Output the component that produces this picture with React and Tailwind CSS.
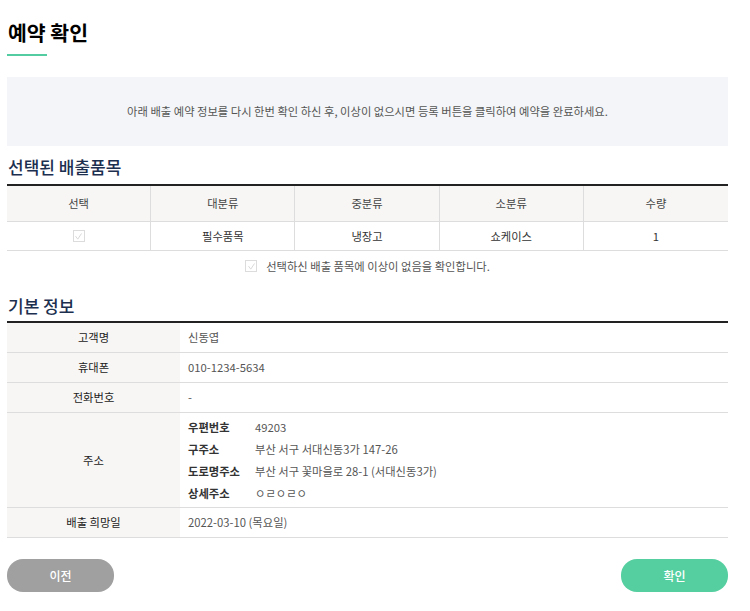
import React from 'react';

const font = { fontFamily: '"Noto Sans CJK KR", "Noto Sans", sans-serif' };

const Check = ({ className = '' }) => (
  <span className={`w-[12px] h-[12px] border border-[#dcdcdc] bg-white flex items-center justify-center ${className}`}>
    <svg viewBox="0 0 12 12" className="w-[9px] h-[9px]" fill="none" stroke="#d8d8d8" strokeWidth="1.3">
      <path d="M2 5.5 L5 9.5 L10 2" />
    </svg>
  </span>
);

const headers = ['선택', '대분류', '중분류', '소분류', '수량'];

const InfoRow = ({ label, children, tall }) => (
  <div className="flex border-b border-[#dddddd]">
    <div className={`w-[173px] shrink-0 bg-[#f7f6f4] flex items-center justify-center text-[11.3px] text-[#222] ${tall ? '' : 'h-[29px]'}`}>
      {label}
    </div>
    <div className="flex-1 pl-[8px] flex items-center text-[11.3px] text-[#555]">{children}</div>
  </div>
);

const addr = [
  ['우편번호', '49203'],
  ['구주소', '부산 서구 서대신동3가 147-26'],
  ['도로명주소', '부산 서구 꽃마을로 28-1 (서대신동3가)'],
  ['상세주소', 'ㅇㄹㅇㄹㅇ'],
];

export default function App() {
  return (
    <div className="bg-white min-h-[611px]" style={font}>
      <div className="ml-[7px] w-[721px] pt-[19px]">
        {/* Title */}
        <h1 className="text-[20.5px] leading-[26px] font-bold text-black pl-[1px]">예약 확인</h1>
        <div className="mt-[9px] w-[40px] h-[2px] bg-[#52cca0]" />

        {/* Notice */}
        <div className="mt-[21px] h-[69px] bg-[#f4f5f8] flex items-center justify-center text-[11.3px] text-[#555]">
          아래 배출 예약 정보를 다시 한번 확인 하신 후, 이상이 없으시면 등록 버튼을 클릭하여 예약을 완료하세요.
        </div>

        {/* Selected items */}
        <h2 className="mt-[9px] text-[17px] leading-[24px] font-medium text-[#1c2f4f] pl-[1px]">선택된 배출품목</h2>
        <div className="mt-[5px] border-t-2 border-[#222]">
          <div className="grid grid-cols-5 bg-[#f7f6f4] border-b border-[#dddddd] h-[36px] text-[11.3px] text-[#444]">
            {headers.map((h, i) => (
              <div key={h} className={`flex items-center justify-center ${i < 4 ? 'border-r border-[#dddddd]' : ''}`}>{h}</div>
            ))}
          </div>
          <div className="grid grid-cols-5 border-b border-[#dddddd] h-[29px] text-[11.3px] text-[#333]">
            <div className="flex items-center justify-center border-r border-[#dddddd]"><Check /></div>
            <div className="flex items-center justify-center border-r border-[#dddddd]">필수품목</div>
            <div className="flex items-center justify-center border-r border-[#dddddd]">냉장고</div>
            <div className="flex items-center justify-center border-r border-[#dddddd]">쇼케이스</div>
            <div className="flex items-center justify-center">1</div>
          </div>
        </div>
        <div className="h-[30px] flex items-center justify-center gap-[9px] text-[11.3px] text-[#555]">
          <Check />
          <span>선택하신 배출 품목에 이상이 없음을 확인합니다.</span>
        </div>

        {/* Basic info */}
        <h2 className="mt-[13px] text-[17px] leading-[24px] font-medium text-[#1c2f4f] pl-[1px]">기본 정보</h2>
        <div className="mt-[3px] border-t-2 border-[#222]">
          <InfoRow label="고객명">신동엽</InfoRow>
          <InfoRow label="휴대폰">010-1234-5634</InfoRow>
          <InfoRow label="전화번호">-</InfoRow>
          <InfoRow label="주소" tall>
            <div className="py-[3px]">
              {addr.map(([k, v]) => (
                <div key={k} className="flex h-[22px] items-center">
                  <span className="w-[67px] font-bold text-[#333]">{k}</span>
                  <span>{v}</span>
                </div>
              ))}
            </div>
          </InfoRow>
          <InfoRow label="배출 희망일">2022-03-10 (목요일)</InfoRow>
        </div>

        {/* Buttons */}
        <div className="mt-[21px] flex justify-between">
          <button type="button" className="w-[107px] h-[33px] rounded-[16px] bg-[#a0a0a0] text-white text-[12px] font-medium">이전</button>
          <button type="button" className="w-[107px] h-[33px] rounded-[16px] bg-[#55cfa0] text-white text-[12px] font-medium">확인</button>
        </div>
      </div>
    </div>
  );
}
